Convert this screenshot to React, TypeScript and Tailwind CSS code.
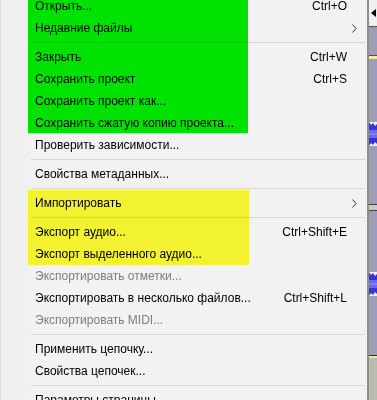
import React from "react";

type Item =
  | { kind: "item"; label: string; shortcut?: string; sub?: boolean; disabled?: boolean }
  | { kind: "sep" };

const items: Item[] = [
  { kind: "item", label: "Открыть...", shortcut: "Ctrl+O" },
  { kind: "item", label: "Недавние файлы", sub: true },
  { kind: "sep" },
  { kind: "item", label: "Закрыть", shortcut: "Ctrl+W" },
  { kind: "item", label: "Сохранить проект", shortcut: "Ctrl+S" },
  { kind: "item", label: "Сохранить проект как..." },
  { kind: "item", label: "Сохранить сжатую копию проекта..." },
  { kind: "item", label: "Проверить зависимости..." },
  { kind: "sep" },
  { kind: "item", label: "Свойства метаданных..." },
  { kind: "sep" },
  { kind: "item", label: "Импортировать", sub: true },
  { kind: "sep" },
  { kind: "item", label: "Экспорт аудио...", shortcut: "Ctrl+Shift+E" },
  { kind: "item", label: "Экспорт выделенного аудио..." },
  { kind: "item", label: "Экспортировать отметки...", disabled: true },
  { kind: "item", label: "Экспортировать в несколько файлов...", shortcut: "Ctrl+Shift+L" },
  { kind: "item", label: "Экспортировать MIDI...", disabled: true },
  { kind: "sep" },
  { kind: "item", label: "Применить цепочку..." },
  { kind: "item", label: "Свойства цепочек..." },
  { kind: "sep" },
  { kind: "item", label: "Параметры страницы..." },
];

function Chevron() {
  return (
    <svg width="5" height="9" viewBox="0 0 5 9" className="block">
      <path d="M0.5 0.5 L4 4.5 L0.5 8.5" fill="none" stroke="#333" strokeWidth="1" />
    </svg>
  );
}

function Wave() {
  return (
    <svg width="8" height="24" viewBox="0 0 8 24" className="block">
      <path d="M0 0 L2 3 L4 1 L6 4 L8 2 L8 22 L6 20 L4 23 L2 21 L0 24 Z" fill="#3434d8" />
      <rect x="0" y="8" width="8" height="8" fill="#6a6af0" />
      <rect x="0" y="11" width="8" height="2" fill="#8080ff" />
    </svg>
  );
}

export default function App() {
  return (
    <div
      className="w-[377px] h-[400px] overflow-hidden flex bg-[#f0f0f0]"
      style={{ fontFamily: '"Liberation Sans", Arial, sans-serif' }}
    >
      {/* Menu */}
      <div className="relative w-[367px] h-[400px] bg-[#f2f2f2] flex overflow-hidden">
        <div className="w-[28px] shrink-0 bg-[#f0f0f0] border-l border-[#dcdcdc]" />
        <div className="absolute inset-0 flex flex-col mt-[-5px]">
          {items.map((it, i) =>
            it.kind === "sep" ? (
              <div key={i} className="h-[7px] shrink-0 flex items-center ml-[31px] mr-[2px]">
                <div className="h-px w-full bg-[#d7d7d7]" />
              </div>
            ) : (
              <div
                key={i}
                className={
                  "h-[22px] shrink-0 flex items-center text-[12px] " +
                  (it.disabled ? "text-[#7d7d7d]" : "text-black")
                }
              >
                <span className="flex-1 pl-[35px] whitespace-nowrap">{it.label}</span>
                {it.shortcut && <span className="whitespace-nowrap">{it.shortcut}</span>}
                <span className="w-[20px] shrink-0 pl-[5px] flex items-center">
                  {it.sub && <Chevron />}
                </span>
              </div>
            )
          )}
        </div>
        {/* highlighter marks */}
        <div className="absolute left-[28px] top-0 w-[220px] h-[133px] bg-[#00f000] mix-blend-multiply pointer-events-none" />
        <div className="absolute left-[28px] top-[190px] w-[221px] h-[75px] bg-[#ffff33] mix-blend-multiply pointer-events-none" />
      </div>
      {/* shadow / border */}
      <div className="w-[2px] h-[400px] bg-[#8e8e8e]" />
      {/* background application strip */}
      <div className="w-[8px] h-[400px] flex flex-col">
        <div className="h-[26px] bg-[#f0f0f0] flex items-center pl-[2px]">
          <svg width="5" height="8" viewBox="0 0 5 8">
            <path d="M5 0 L0 4 L5 8 Z" fill="#000" />
          </svg>
        </div>
        <div className="h-px bg-[#505050]" />
        <div className="h-[28px] bg-[#9d9db5]" />
        <div className="h-px bg-[#505050]" />
        <div className="h-[3px] bg-[#f2e6a6]" />
        <div className="h-[63px] bg-[#9d9db5]" />
        <Wave />
        <div className="h-[58px] bg-[#9d9db5]" />
        <div className="h-px bg-[#404040]" />
        <div className="h-[5px] bg-[#c8c8c8]" />
        <div className="h-px bg-[#404040]" />
        <div className="h-[61px] bg-[#9d9db5]" />
        <Wave />
        <div className="h-[59px] bg-[#9d9db5]" />
        <div className="h-px bg-[#303030]" />
        <div className="h-[2px] bg-[#f2e6a6]" />
        <div className="flex-1 bg-[#b9b9ad]" />
      </div>
    </div>
  );
}
